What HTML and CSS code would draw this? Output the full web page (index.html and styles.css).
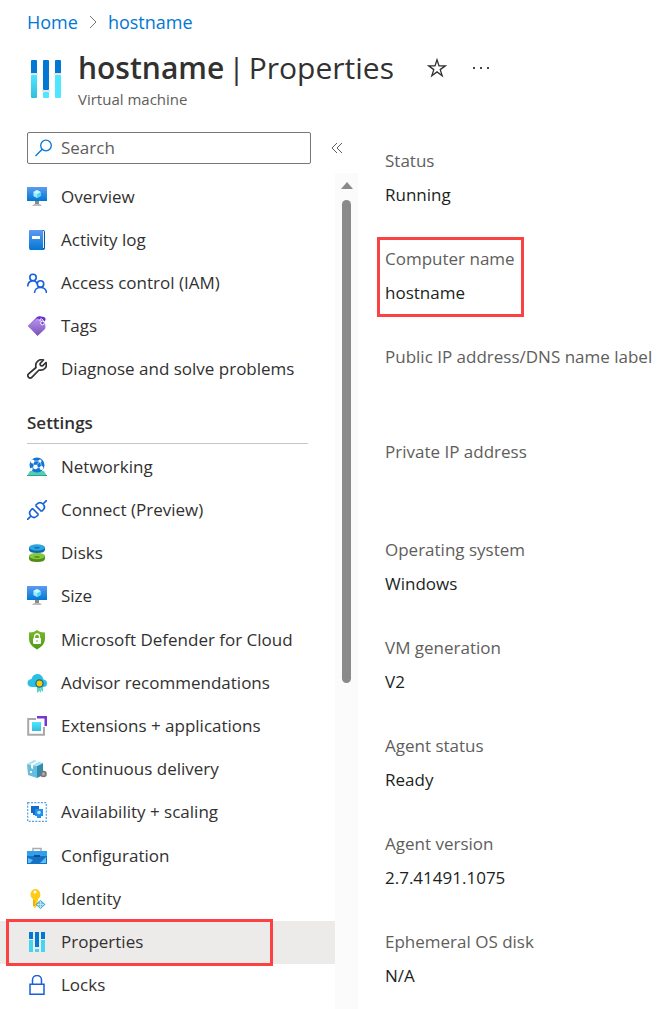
FILE: index.html
```html
<!DOCTYPE html>
<html lang="en">
<head>
<meta charset="utf-8">
<meta name="viewport" content="width=device-width, initial-scale=1">
<title>hostname | Properties</title>
<link rel="stylesheet" href="styles.css">
</head>
<body>
<svg class="defs" aria-hidden="true">
  <defs>
    <linearGradient id="blue" x1="0" y1="0" x2="0" y2="1"><stop offset="0" stop-color="#5e9bf0"/><stop offset="1" stop-color="#0078d4"/></linearGradient>
    <linearGradient id="purple" x1="0" y1="0" x2="0" y2="1"><stop offset="0" stop-color="#b796f0"/><stop offset="1" stop-color="#7a4fb5"/></linearGradient>
    <linearGradient id="cyan" x1="0" y1="0" x2="0" y2="1"><stop offset="0" stop-color="#50e6ff"/><stop offset="1" stop-color="#32bedd"/></linearGradient>
    <linearGradient id="green" x1="0" y1="0" x2="0" y2="1"><stop offset="0" stop-color="#7cb82f"/><stop offset="1" stop-color="#4d9a13"/></linearGradient>
    <symbol id="vm" viewBox="0 0 20 20">
      <path fill="url(#blue)" d="M0 0h20v14H0z"/>
      <path fill="#9cebff" d="m10 3 3.600 2v4L10 11 6.400 9V5z"/><path fill="#50d5f5" d="m10 7 3.600-2v4L10 11z"/><path fill="#c9f7ff" d="m10 3 3.600 2L10 7 6.400 5z"/>
      <path fill="#8a8a8a" d="M8 14h4v3H8z"/><path fill="#bdbdbd" d="M7 17h6l2 2H5z"/>
    </symbol>
    <symbol id="bars" viewBox="0 0 30 38">
      <rect width="6" height="14" rx="1" fill="#0078d4"/><rect y="15" width="6" height="23" rx="1" fill="url(#cyan)"/>
      <rect x="12" width="6" height="30" rx="1" fill="#0078d4"/><rect x="12" y="32" width="6" height="6" rx="1" fill="#50e6ff"/>
      <rect x="24" width="6" height="14" rx="1" fill="#0078d4"/><rect x="24" y="15" width="6" height="23" rx="1" fill="#50e6ff"/>
      <path fill="#e3e6e8" d="M-1 13h8v2h-8zM23 13h8v2h-8zM11 30h8v2h-8z"/>
    </symbol>
  </defs>
</svg>

<header class="top">
  <nav class="crumbs" aria-label="Breadcrumb">
    <a href="#home">Home</a>
    <svg width="8" height="14" viewBox="0 0 8 14" aria-hidden="true"><path d="m1 1 6 6-6 6" fill="none" stroke="#797775"/></svg>
    <a href="#host">hostname</a>
  </nav>
  <div class="heading">
    <svg class="heading-icon" viewBox="-1 0 32 38" aria-hidden="true"><use href="#bars" width="30" height="38"/></svg>
    <div>
      <div class="title-row">
        <h1><b>hostname</b> <span>|</span> <span>Properties</span></h1>
        <button class="plain" aria-label="Favorite"><svg width="20" height="20" viewBox="0 0 20 20"><path d="m10 1.800 2 6.100h6.300l-5.100 3.700 2 6.200-5.200-3.900-5.200 3.900 2-6.200-5.100-3.700H8z" fill="none" stroke="#323130" stroke-width="1.300"/></svg></button>
        <button class="plain" aria-label="More"><svg width="16" height="20" viewBox="0 0 16 20"><path fill="#484644" d="M0 9h2v2H0zM7 9h2v2H7zM14 9h2v2h-2z"/></svg></button>
      </div>
      <p class="kind">Virtual machine</p>
    </div>
  </div>
</header>

<div class="body">
  <aside class="side">
    <div class="tools">
      <label class="search">
        <svg width="18" height="18" viewBox="0 0 18 18" aria-hidden="true"><g fill="none" stroke="#0078d4" stroke-width="1.300"><circle cx="11" cy="6.500" r="5.300"/><path d="m7.200 10.300-6.700 6.700"/></g></svg>
        <input type="search" placeholder="Search" aria-label="Search">
      </label>
      <button class="plain" aria-label="Collapse menu"><svg width="12" height="12" viewBox="0 0 12 12"><path d="M6 1 1 6l5 5M11 1 6 6l5 5" fill="none" stroke="#605e5c"/></svg></button>
    </div>
    <div class="panel">
      <nav class="menu" aria-label="Resource menu">
        <ul class="general">
          <li><a href="#overview"><svg viewBox="0 0 20 20"><use href="#vm"/></svg>Overview</a></li>
          <li><a href="#activity"><svg viewBox="0 0 20 20"><path fill="#005ba1" d="M3 0h13a2 2 0 0 1 2 2v16a2 2 0 0 1-2 2H3z"/><path fill="#eee" d="M4 1h13v17H4z"/><path fill="url(#blue)" d="M3 0h12a1 1 0 0 1 1 1v19H4a2 2 0 0 1-2-2V1a1 1 0 0 1 1-1z"/><path fill="#fff" d="M5 6h8v3H5z"/></svg>Activity log</a></li>
          <li><a href="#access"><svg viewBox="0 0 20 20"><g fill="none" stroke="#1561dc" stroke-width="1.600"><circle cx="6" cy="4.500" r="3.200"/><path d="M.8 13.500c0-7 8-7 9.200-2.700"/><circle cx="13.500" cy="11" r="3.200"/><path d="M7.500 20c0-7.500 12-7.500 12 0"/></g></svg>Access control (IAM)</a></li>
          <li><a href="#tags"><svg viewBox="0 0 20 20"><path fill="#6b2fd0" d="m1 10 9-9q1-1 3-.8l4 .8q2 .5 1.500 3L9 17z"/><path fill="url(#purple)" d="m1 10 8-7q1-1 3 0l4 2q2 1 2.200 3l.3 3q0 1.500-1 2.500l-7 6.500z"/><circle cx="15.500" cy="7" r="1.800" fill="#7038cf" stroke="#fff"/><path d="M13 5V3.500q1-1.500 2.500 0L17 6" fill="none" stroke="#fff"/></svg>Tags</a></li>
          <li><a href="#diagnose"><svg viewBox="0 0 20 20"><path d="M9 8.500Q8 4.500 10.500 2.300 13-.1 16.500 1l-3.300 3.400q-.4 1.200.4 2t2 .4L19 3.500q1.300 3.500-1.200 6-2.200 2.200-5.800 1.500l-7.200 7.300q-1.500 1.500-3.200 0-1.700-1.800 0-3.400z" fill="none" stroke="#323130" stroke-width="1.700" stroke-linejoin="round"/></svg>Diagnose and solve problems</a></li>
        </ul>
        <h2>Settings</h2>
        <ul class="settings">
          <li><a href="#networking"><svg viewBox="0 0 20 20"><path fill="#4fd0b0" d="m3 14-3 5h20l-3-5z"/><path fill="#2aa58b" d="M0 18h20v1H0z"/><circle cx="10" cy="8" r="7.500" fill="#1474d4"/><path d="M5 4 13 4M5 4l3 6 7 1M3 12l5-2 5-6 2 7" stroke="#8cc5f5" fill="none"/><g fill="#fff"><circle cx="5.500" cy="4.500" r="1.900"/><circle cx="13" cy="4" r="1.500"/><circle cx="8.500" cy="10" r="2.300"/><circle cx="14.500" cy="11" r="1.900"/><circle cx="4.500" cy="12" r="1.200"/></g></svg>Networking</a></li>
          <li><a href="#connect"><svg viewBox="0 0 20 20"><g fill="none" stroke="#1561dc" stroke-width="1.700"><path d="m0 20 4-4M16 4l4-4M8.500 5.500l6 6M5.500 8.500l6 6M5.500 8.500 4 10q-3 3 0 6t6 0l1.500-1.500M8.500 5.500 10 4q3-3 6 0t0 6l-1.500 1.500"/></g></svg>Connect (Preview)</a></li>
          <li><a href="#disks"><svg viewBox="0 0 20 20"><path fill="#4d8d1a" d="M2 12.500v3q0 3.500 8 3.500t8-3.500v-3z"/><ellipse cx="10" cy="13" rx="8" ry="3.200" fill="#86c83c"/><ellipse cx="10" cy="14" rx="3" ry="1" fill="#58941f"/><path fill="#0669ad" d="M2 4.500v2Q2 10 10 10t8-3.500v-2z"/><ellipse cx="10" cy="4.500" rx="8" ry="3.300" fill="#30a4dc"/><ellipse cx="10" cy="4.800" rx="3" ry="1" fill="#1278bd"/></svg>Disks</a></li>
          <li><a href="#size"><svg viewBox="0 0 20 20"><use href="#vm"/></svg>Size</a></li>
          <li><a href="#defender"><svg viewBox="0 0 20 20"><path fill="url(#green)" d="M10 0q3 2.600 8 2.500V9q0 6-8 10.500Q2 15 2 9V2.500Q7 2.600 10 0z"/><path d="M7.500 9V6.500a2.500 2.500 0 0 1 5 0V9" fill="none" stroke="#fff" stroke-width="1.300"/><rect x="6" y="8" width="8" height="6" rx="1" fill="#fff"/><path d="M10 10v2" stroke="#79af47"/></svg>Microsoft Defender for Cloud</a></li>
          <li><a href="#advisor"><svg viewBox="0 0 20 20"><path fill="#2bbfe6" d="M4.500 14Q.5 13.500.5 10t4-4Q6 1 10.500 1t6 5.500Q20 7 20 10.500T16 14z"/><path fill="#54d7c9" d="M10 13v7l2.500-2 1.500 2V13zM16 12v7l-2-2-1-5z"/><circle cx="12.500" cy="10.500" r="3.600" fill="#ffca00" stroke="#176b85" stroke-width="1.300"/></svg>Advisor recommendations</a></li>
          <li><a href="#extensions"><svg viewBox="0 0 20 20"><path d="M9 3H1.200v15.800H17V11" fill="none" stroke="#a9a9a9" stroke-width="2"/><path fill="url(#cyan)" d="M5 6h9v9H5z"/><path fill="#7736d0" d="M10 0h10v10h-2.500V2.500H10z"/></svg>Extensions + applications</a></li>
          <li><a href="#delivery"><svg viewBox="0 0 20 20"><path fill="#66bddc" d="m0 5 10 2v12L1 16z"/><path fill="#318dad" d="m10 7 6-3v12l-6 3z"/><path fill="#a5e2f3" d="m0 5 7-4 9 3-6 3z"/><path fill="#fff" d="m4 5 6-3 2 .7L6 6v4L4 9zM3 12h2v2H3z"/><circle cx="16.500" cy="15" r="2.500" fill="#aaa" stroke="#777" stroke-width="1.600"/></svg>Continuous delivery</a></li>
          <li><a href="#availability"><svg viewBox="0 0 20 20"><rect x=".7" y=".7" width="18.600" height="18.600" fill="none" stroke="#4ba3e8" stroke-width="1.200" stroke-dasharray="2 1.300"/><path fill="#126cc5" d="M4 4h8v7H4zM6 11h3v2H6z"/><path fill="#2490ec" d="M8 7h8v7H8zM10 14h4v2h-4z"/><circle cx="12" cy="10.500" r="1.800" fill="#9cebff"/></svg>Availability + scaling</a></li>
          <li><a href="#configuration"><svg viewBox="0 0 20 20"><path d="M6 6V2.500h8V6" fill="none" stroke="#ababab" stroke-width="1.500"/><path fill="#1671c4" d="M0 5h20v13H0z"/><path fill="#2fa0ed" d="M0 5h20v5H0z"/><path fill="#0a4f91" d="M7 9h6v2H7z"/><path fill="#5cc2f6" d="m1 12 5 2-3 3H1zM19 11v6h-6z"/></svg>Configuration</a></li>
          <li><a href="#identity"><svg viewBox="0 0 20 20"><path fill="#ffca18" d="M8 0a5.500 5.500 0 0 1 3 10v2l-1 1 1 1-1 1 1 1-3 3-2-2v-7A5.500 5.500 0 0 1 8 0z"/><circle cx="8" cy="3" r="1.500" fill="#fff"/><path d="M7 11v6" stroke="#d99b00"/><path fill="#45a9c9" d="m13.500 11 5 4.500-5 4.500-5-4.500z"/><path d="M13.500 12v7M10 15.500h7M10.500 16l3-3 3 3-3 2z" stroke="#c9eff8" fill="none" stroke-width=".8"/></svg>Identity</a></li>
          <li class="current"><a href="#properties" aria-current="page"><svg viewBox="0 0 20 20"><g fill="#0078d4"><path d="M2 0h4v7H2zM8 0h4v15H8zM14 0h4v7h-4z"/></g><g fill="#45d5f0"><path d="M2 8h4v12H2zM8 17h4v3H8zM14 8h4v12h-4z"/></g></svg>Properties</a></li>
          <li><a href="#locks"><svg viewBox="0 0 20 20"><g fill="none" stroke="#1561dc" stroke-width="1.500"><path d="M3 9.200h14v10H3zM5.500 9V5a4.500 4.500 0 0 1 9 0v4"/></g></svg>Locks</a></li>
        </ul>
      </nav>
      <div class="scroll" aria-hidden="true"><i class="arrow"></i><i class="thumb"></i></div>
    </div>
  </aside>

  <main>
    <dl class="fields">
      <div><dt>Status</dt><dd>Running</dd></div>
      <div class="marked"><dt>Computer name</dt><dd>hostname</dd></div>
      <div class="blank"><dt>Public IP address/DNS name label</dt><dd></dd></div>
      <div><dt>Private IP address</dt><dd></dd></div>
      <div><dt>Operating system</dt><dd>Windows</dd></div>
      <div><dt>VM generation</dt><dd>V2</dd></div>
      <div><dt>Agent status</dt><dd>Ready</dd></div>
      <div><dt>Agent version</dt><dd>2.7.41491.1075</dd></div>
      <div><dt>Ephemeral OS disk</dt><dd>N/A</dd></div>
    </dl>
  </main>
</div>
</body>
</html>
```

FILE: styles.css
```css
*, *::before, *::after { box-sizing: border-box; }

body {
  margin: 0;
  min-height: 100vh;
  display: flex;
  flex-direction: column;
  background: #fff;
  color: #323130;
  font: 17px/24px "Open Sans", "Noto Sans", sans-serif;
}

h1, h2, p, ul, dl, dd { margin: 0; padding: 0; font-weight: 400; }
ul { list-style: none; }
a { color: inherit; text-decoration: none; }

.defs { position: absolute; width: 0; height: 0; }

.plain {
  display: flex;
  padding: 0;
  border: 0;
  background: none;
}

.top { padding: 10px 27px 0; }

.crumbs {
  display: flex;
  align-items: center;
  gap: 11px;
  color: #0078d4;
  font-size: 18px;
}

.heading { display: flex; gap: 16px; padding-top: 14px; }
.heading-icon { width: 32px; height: 38px; margin: 12px 0 0 3px; }
.title-row { display: flex; align-items: center; }
.title-row .plain:nth-of-type(1) { margin-left: 33px; }
.title-row .plain:nth-of-type(2) { margin-left: 26px; }
h1 { display: flex; gap: 4px; font-size: 30px; line-height: 40px; white-space: nowrap; }
h1 b { font-weight: 600; }
.kind { color: #605e5c; font-size: 15px; line-height: 22px; }

.body { flex: 1; display: flex; padding-top: 22px; }

.side { flex: 0 0 358px; display: flex; flex-direction: column; }

.tools { display: flex; align-items: center; gap: 20px; padding: 0 15px 0 27px; }

.search {
  flex: 1;
  display: flex;
  align-items: center;
  gap: 8px;
  height: 32px;
  padding: 0 7px;
  border: 1px solid #797775;
  border-radius: 2px;
}
.search input {
  flex: 1;
  min-width: 0;
  padding: 0;
  border: 0;
  outline: 0;
  background: none;
  color: inherit;
  font: inherit;
}
.search input::placeholder { color: #605e5c; opacity: 1; }

.panel { flex: 1; display: flex; padding-top: 9px; }
.menu { flex: 1; display: flex; flex-direction: column; padding: 2px 0; }

.menu li { position: relative; display: flex; min-height: 43px; }
.menu a {
  flex: 1;
  display: flex;
  align-items: center;
  gap: 14px;
  padding-left: 27px;
  white-space: nowrap;
}
.menu a svg { width: 20px; height: 20px; flex: none; }

h2 {
  margin: 21px 27px 1px;
  padding-bottom: 8px;
  border-bottom: 1px solid #c8c6c4;
  font-size: 17px;
  font-weight: 600;
}

.settings { flex: 1; display: flex; flex-direction: column; }
.settings li { flex: 1; }
.current { background: #edebe9; }

.current::after,
.marked::after {
  content: "";
  position: absolute;
  border: 3px solid #fb4141;
  pointer-events: none;
}
.current::after { inset: -2px 62px -2px 6px; }
.marked::after { top: -10px; left: -8px; width: 147px; height: 80px; }

.scroll {
  flex: 0 0 23px;
  display: flex;
  flex-direction: column;
  align-items: center;
  padding-top: 9px;
  background: #fbfbfb;
}
.arrow {
  border: 6px solid transparent;
  border-top: 0;
  border-bottom: 7px solid #8a8a8a;
}
.thumb {
  width: 9px;
  height: 483px;
  margin-top: 11px;
  border-radius: 5px;
  background: #8a8a8a;
}

main { flex: 1; padding: 17px 0 0 27px; }
.fields > div { position: relative; height: 98px; white-space: nowrap; }
.fields > .blank { height: 95px; }
.fields > div:last-child { height: auto; }
dt { color: #605e5c; }
dd { padding-top: 10px; color: #201f1e; }
```
